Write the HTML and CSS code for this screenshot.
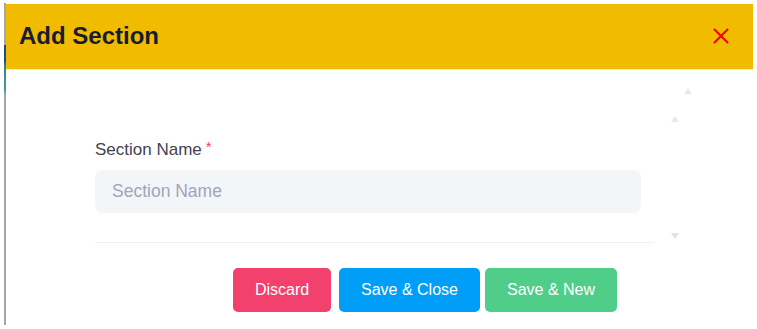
FILE: index.html
```html
<!DOCTYPE html>
<html>
<head>
<meta charset="utf-8">
<link rel="stylesheet" href="styles.css">
</head>
<body>
<div class="page">
  <div class="edge"></div>
  <div class="modal">
    <div class="modal-header">
      <h2 class="title">Add Section</h2>
      <button class="close" aria-label="Close">
        <svg width="16" height="16" viewBox="0 0 16 16"><path d="M1.5 1.5 L14.5 14.5 M14.5 1.5 L1.5 14.5" stroke="#f20000" stroke-width="2" stroke-linecap="round" fill="none"/></svg>
      </button>
    </div>
    <div class="modal-body">
      <span class="arrow up a1"></span>
      <span class="arrow up a2"></span>
      <span class="arrow down a3"></span>
      <form class="form">
        <label class="label">Section Name<span class="req">*</span></label>
        <input class="input" type="text" placeholder="Section Name">
        <div class="sep"></div>
        <div class="actions">
          <button type="button" class="btn discard">Discard</button>
          <button type="button" class="btn save-close">Save &amp; Close</button>
          <button type="button" class="btn save-new">Save &amp; New</button>
        </div>
      </form>
    </div>
  </div>
</div>
</body>
</html>
```

FILE: styles.css
```css
* { box-sizing: border-box; }
html, body { margin: 0; padding: 0; background: #fff; }
body { font-family: "Liberation Sans", Arial, sans-serif; width: 757px; height: 329px; overflow: hidden; }

.page { display: flex; align-items: flex-start; }

.edge {
  width: 2px;
  height: 322px;
  margin-left: 4px;
  margin-top: 3px;
  background: linear-gradient(to bottom, #a6a6a6 0, #a6a6a6 42px, #1d4a8c 42px, #1d4a8c 58px, #2f7f95 62px, #4a9aa2 88px, #a6a6a6 91px, #a6a6a6 100%);
}

.modal { width: 747px; margin-top: 4px; background: #fff; }

.modal-header {
  height: 66px;
  background: #f1bc00;
  border-bottom: 1px solid #e8ecf2;
  display: flex;
  align-items: center;
  justify-content: space-between;
  padding: 0 24px 2px 13px;
}

.title {
  margin: 0;
  font-size: 24px;
  font-weight: 700;
  color: #181c32;
  line-height: 1;
}

.close {
  border: 0;
  background: transparent;
  padding: 0;
  width: 16px;
  height: 16px;
  display: flex;
}

.modal-body { position: relative; padding: 67px 0 0 89px; }

.arrow { position: absolute; width: 0; height: 0; border-left: 4.5px solid transparent; border-right: 4.5px solid transparent; }
.arrow.up { border-bottom: 6px solid #e6e9ee; }
.arrow.down { border-top: 6px solid #dde1e8; }
.a1 { left: 678px; top: 18px; }
.a2 { left: 665px; top: 46px; }
.a3 { left: 665px; top: 163px; }

.form { display: flex; flex-direction: column; width: 559px; }

.label {
  font-size: 17px;
  color: #3f4254;
  line-height: 20px;
}
.req { color: #f1416c; font-size: 15px; margin-left: 4px; vertical-align: 3px; }

.input {
  margin-top: 10px;
  width: 546px;
  height: 43px;
  border: 0;
  border-radius: 8px;
  background: #f3f6f9;
  padding: 0 17px;
  font-family: "Liberation Sans", Arial, sans-serif;
  font-size: 17.5px;
  color: #5e6278;
  outline: none;
}
.input::placeholder { color: #a1a5b7; }

.sep { margin-top: 29px; height: 1px; background: #eff2f5; }

.actions { display: flex; margin-top: 25px; padding-left: 138px; }

.btn {
  border: 0;
  border-radius: 5px;
  height: 44px;
  padding: 0;
  white-space: nowrap;
  text-align: center;
  color: #fff;
  font-family: "Liberation Sans", Arial, sans-serif;
  font-size: 16px;
}
.discard { background: #f1416c; width: 98px; }
.save-close { background: #009ef7; width: 141px; margin-left: 8px; }
.save-new { background: #50cd89; width: 132px; margin-left: 5px; }
```
